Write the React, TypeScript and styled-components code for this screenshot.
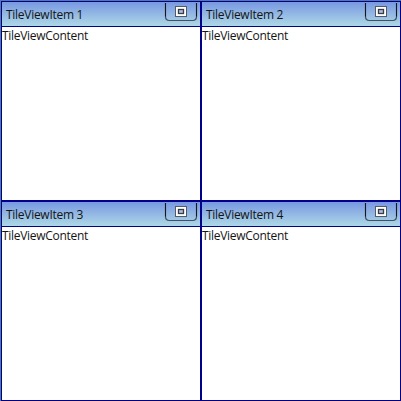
import React from "react";
import styled, { createGlobalStyle } from "styled-components";

const GlobalStyle = createGlobalStyle`
  body {
    margin: 0;
    overflow: hidden;
  }
`;

const TileView = styled.main`
  box-sizing: border-box;
  width: 401px;
  height: 401px;
  padding: 1px 0 0 1px;
  display: grid;
  grid-template-columns: 200px 200px;
  grid-template-rows: 200px 200px;
  background: #4f7ca6;
  color: #141414;
  font: 12px/16px "Open Sans", "Noto Sans", sans-serif;
`;

const Tile = styled.section`
  box-sizing: border-box;
  display: flex;
  flex-direction: column;
  border: 1px solid #00008b;
  background: #fff;
`;

const TileHeader = styled.header`
  box-sizing: border-box;
  flex: none;
  height: 25px;
  padding: 0 2px 0 4px;
  display: flex;
  justify-content: space-between;
  border-bottom: 1px solid #00008b;
  background: linear-gradient(#7898e2, #add8e6);
`;

const Title = styled.span`
  padding-top: 5px;
  white-space: nowrap;
  letter-spacing: -0.28px;
`;

const MaximizeButton = styled.button`
  width: 34px;
  height: 20px;
  margin: 0;
  padding: 0;
  border: 0;
  background: none;

  svg {
    display: block;
  }
`;

const Content = styled.div`
  padding-top: 1px;
  white-space: nowrap;
  letter-spacing: -0.3px;
`;

const MaximizeIcon = () => (
  <svg width="34" height="20" viewBox="0 0 34 20" fill="none">
    <path d="M1.5 1V14.5Q1.5 18.5 5.5 18.5H28.5Q32.5 18.5 32.5 14.5V1" stroke="#46505f" strokeWidth="1.2" />
    <path d="M1.5 1V14.5M32.5 1V14.5" stroke="#17171d" />
    <rect x="11.5" y="4.5" width="11" height="10" fill="#fff" stroke="#555b66" />
    <rect x="14.5" y="7.5" width="5" height="4" fill="#a5bfe8" stroke="#3c3c40" strokeWidth="1.3" />
  </svg>
);

const tiles = [1, 2, 3, 4];

export default function App() {
  return (
    <>
      <GlobalStyle />
      <TileView>
        {tiles.map((n) => (
          <Tile key={n}>
            <TileHeader>
              <Title>TileViewItem {n}</Title>
              <MaximizeButton aria-label="Maximize">
                <MaximizeIcon />
              </MaximizeButton>
            </TileHeader>
            <Content>TileViewContent</Content>
          </Tile>
        ))}
      </TileView>
    </>
  );
}
